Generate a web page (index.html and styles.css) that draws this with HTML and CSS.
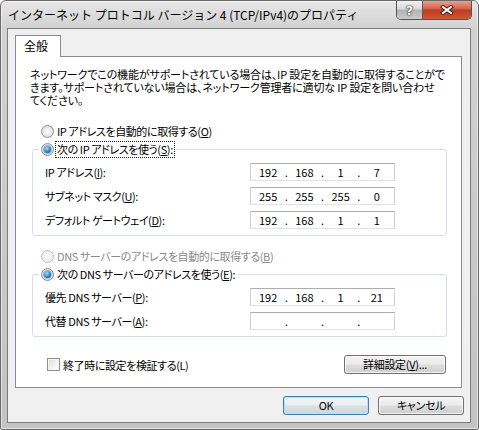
FILE: index.html
```html
<!DOCTYPE html>
<html lang="ja">
<head>
<meta charset="utf-8">
<title>インターネット プロトコル バージョン 4 (TCP/IPv4)のプロパティ</title>
<link rel="stylesheet" href="styles.css">
</head>
<body>
<div class="window">
  <div class="titlebar">
    <div class="title">インターネット プロトコル バージョン 4 (TCP/IPv4)のプロパティ</div>
    <div class="caption-buttons">
      <div class="cap help">?</div>
      <div class="cap close">
        <svg width="14" height="10" viewBox="0 0 14 10"><path d="M3 2 L11 8 M11 2 L3 8" stroke="#3b1a14" stroke-width="4" stroke-linecap="square" fill="none"/><path d="M3 2 L11 8 M11 2 L3 8" stroke="#fff" stroke-width="2" stroke-linecap="square" fill="none"/></svg>
      </div>
    </div>
  </div>
  <div class="client">
    <div class="tabs"><div class="tab">全般</div></div>
    <div class="panel">
      <p class="desc">ネットワークでこの機能がサポートされている場合は、IP 設定を自動的に取得することがで<br>きます。サポートされていない場合は、ネットワーク管理者に適切な IP 設定を問い合わせ<br>てください。</p>

      <div class="radio-row"><span class="radio"></span><span class="rlabel">IP アドレスを自動的に取得する(<u>O</u>)</span></div>
      <fieldset class="group">
        <legend><span class="radio on"><span class="dot"></span></span><span class="rlabel focus">次の IP アドレスを使う(<u>S</u>):</span></legend>
        <div class="row"><span class="flabel">IP アドレス(<u>I</u>):</span><div class="ip"><span class="seg">192</span><span class="sep">.</span><span class="seg">168</span><span class="sep">.</span><span class="seg">1</span><span class="sep">.</span><span class="seg">7</span></div></div>
        <div class="row"><span class="flabel">サブネット マスク(<u>U</u>):</span><div class="ip"><span class="seg">255</span><span class="sep">.</span><span class="seg">255</span><span class="sep">.</span><span class="seg">255</span><span class="sep">.</span><span class="seg">0</span></div></div>
        <div class="row"><span class="flabel">デフォルト ゲートウェイ(<u>D</u>):</span><div class="ip"><span class="seg">192</span><span class="sep">.</span><span class="seg">168</span><span class="sep">.</span><span class="seg">1</span><span class="sep">.</span><span class="seg">1</span></div></div>
      </fieldset>

      <div class="radio-row second"><span class="radio disabled"></span><span class="rlabel muted">DNS サーバーのアドレスを自動的に取得する(<u>B</u>)</span></div>
      <fieldset class="group">
        <legend><span class="radio on"><span class="dot"></span></span><span class="rlabel">次の DNS サーバーのアドレスを使う(<u>E</u>):</span></legend>
        <div class="row"><span class="flabel">優先 DNS サーバー(<u>P</u>):</span><div class="ip"><span class="seg">192</span><span class="sep">.</span><span class="seg">168</span><span class="sep">.</span><span class="seg">1</span><span class="sep">.</span><span class="seg">21</span></div></div>
        <div class="row"><span class="flabel">代替 DNS サーバー(<u>A</u>):</span><div class="ip"><span class="seg"></span><span class="sep">.</span><span class="seg"></span><span class="sep">.</span><span class="seg"></span><span class="sep">.</span><span class="seg"></span></div></div>
      </fieldset>

      <div class="options-row">
        <div class="check"><span class="box"></span><span>終了時に設定を検証する(L)</span></div>
        <button class="btn adv">詳細設定(<u>V</u>)...</button>
      </div>
    </div>
    <div class="footer">
      <button class="btn default">OK</button>
      <button class="btn">キャンセル</button>
    </div>
  </div>
</div>
</body>
</html>
```
FILE: styles.css
```css
* { box-sizing: border-box; }
html, body { margin: 0; padding: 0; }
body {
  width: 479px;
  height: 430px;
  overflow: hidden;
  background: #fff;
  font-family: "Noto Sans CJK JP", "Noto Sans", sans-serif;
  font-size: 12px;
  color: #000;
}
u { text-decoration: underline; text-underline-offset: 1px; }

.window {
  width: 479px;
  height: 430px;
  border: 1px solid #6a6a6a;
  border-radius: 6px 6px 2px 2px;
  background: linear-gradient(to bottom, #e6e6e6 0, #d2d2d2 27px, #c8c8c8 60%, #c3c3c3 100%);
  box-shadow: inset 0 0 0 1px rgba(255,255,255,0.55);
  display: flex;
  flex-direction: column;
}

.titlebar {
  height: 27px;
  flex: 0 0 27px;
  display: flex;
  align-items: flex-start;
  padding-left: 7px;
}
.title {
  flex: 1;
  margin-top: 6px;
  line-height: 16px;
  font-size: 12px;
  white-space: nowrap;
  color: #000;
}
.caption-buttons {
  display: flex;
  width: 76px;
  height: 19px;
  margin-right: 6px;
  border: 1px solid #555;
  border-top: none;
  border-radius: 0 0 5px 5px;
  overflow: hidden;
}
.cap {
  display: flex;
  align-items: center;
  justify-content: center;
}
.help {
  flex: 0 0 26px;
  border-right: 1px solid #5a5a5a;
  background: linear-gradient(to bottom, #f2f2f2 0, #d9d9d9 45%, #b2b2b2 50%, #c9c9c9 100%);
  color: #fff;
  font-family: "DejaVu Sans", sans-serif;
  font-weight: bold;
  font-size: 13px;
  line-height: 17px;
  text-shadow: 0 0 1px #333, 0 0 1px #333, 0 0 2px #444;
}
.close {
  flex: 1;
  background: linear-gradient(to bottom, #e9a08d 0, #d36a52 40%, #c13a1e 52%, #d0573a 100%);
}

.client {
  flex: 1;
  margin: 0 7px 6px 6px;
  border: 1px solid #7c7c7c;
  background: #f0f0f0;
  padding: 6px 6px 0 7px;
  display: flex;
  flex-direction: column;
}

.tabs {
  display: flex;
  height: 21px;
  flex: 0 0 21px;
}
.tab {
  position: relative;
  z-index: 1;
  width: 46px;
  height: 22px;
  border: 1px solid #898c95;
  border-bottom: none;
  background: #fff;
  padding-left: 8px;
  line-height: 20px;
}

.panel {
  height: 332px;
  flex: 0 0 332px;
  margin-right: 2px;
  background: #fff;
  border: 1px solid #898c95;
  padding: 0 14px;
  display: flex;
  flex-direction: column;
  font-size: 11px;
  letter-spacing: -0.4px;
  font-feature-settings: "palt";
}
.desc {
  margin: 11px 0 0 0;
  line-height: 13px;
  letter-spacing: -0.15px;
  white-space: nowrap;
}

.radio-row {
  display: flex;
  align-items: center;
  height: 18px;
  margin: 15px 0 0 11px;
}
.radio-row.second { margin-top: 11px; }

.radio {
  flex: 0 0 13px;
  width: 13px;
  height: 13px;
  border-radius: 50%;
  border: 1px solid #8e8f8f;
  background: radial-gradient(circle at 50% 50%, #ffffff 0, #eeeeee 40%, #d4d4d4 90%);
  display: flex;
  align-items: center;
  justify-content: center;
  margin-right: 2px;
}
.radio.disabled {
  border-color: #c2c2c2;
  background: radial-gradient(circle at 50% 50%, #fbfbfb 0, #f0f0f0 60%, #e4e4e4 100%);
}
.dot {
  width: 7px;
  height: 7px;
  border-radius: 50%;
  background: radial-gradient(circle at 40% 35%, #a8e2fb 0, #3b9ee0 40%, #0c5a9c 80%, #0a4a82 100%);
  box-shadow: 0 0 0 1px rgba(40, 90, 140, 0.35);
}
.rlabel {
  padding: 0 1px;
  line-height: 15px;
  white-space: nowrap;
}
.rlabel.focus { outline: 1px dotted #222; outline-offset: 0; }
.muted { color: #8a8a8a; }

.group {
  margin: 0 0 0 2px;
  padding: 5px 51px 6px 12px;
  border: 1px solid #d5dfe5;
  border-radius: 3px;
  min-width: 0;
}
.group legend {
  display: flex;
  align-items: center;
  height: 18px;
  padding: 0 2px;
  margin-left: -6px;
}

.row {
  display: flex;
  align-items: center;
  height: 18px;
}
.row + .row { margin-top: 6px; }
.flabel {
  flex: 1;
  white-space: nowrap;
}
.ip {
  width: 145px;
  height: 18px;
  border: 1px solid;
  border-color: #abadb3 #cfd3d9 #dfe3e8 #cfd3d9;
  background: #fff;
  display: flex;
  align-items: center;
  padding: 0 2px;
  letter-spacing: 0;
  font-feature-settings: normal;
}
.seg {
  flex: 1;
  text-align: center;
  line-height: 16px;
}
.sep {
  flex: 0 0 6px;
  text-align: center;
  line-height: 16px;
}

.options-row {
  display: flex;
  align-items: center;
  justify-content: space-between;
  height: 19px;
  margin-top: 18px;
}
.check {
  display: flex;
  align-items: center;
  margin-left: 17px;
  gap: 3px;
}
.box {
  width: 13px;
  height: 13px;
  border: 1px solid #8e8f8f;
  background: linear-gradient(135deg, #dcdcdc 0, #f0f0f0 50%, #ffffff 100%);
  box-shadow: inset 0 0 0 1px #f6f6f6;
}

.btn {
  height: 19px;
  border: 1px solid #707070;
  border-radius: 3px;
  background: linear-gradient(to bottom, #f4f4f4 0, #ebebeb 48%, #dddddd 52%, #cfcfcf 100%);
  box-shadow: inset 0 0 0 1px rgba(255,255,255,0.75);
  font-family: "Noto Sans CJK JP", "Noto Sans", sans-serif;
  font-size: 11px;
  letter-spacing: -0.3px;
  line-height: 15px;
  color: #000;
  padding: 0;
  font-feature-settings: "palt";
}
.adv {
  width: 102px;
  margin-right: 1px;
}
.footer {
  display: flex;
  justify-content: flex-end;
  gap: 9px;
  margin-top: 8px;
}
.footer .btn { width: 86px; }
.btn.default {
  border-color: #3c7fb1;
  box-shadow: inset 0 0 0 1px #b6e3f8;
  background: linear-gradient(to bottom, #f2f6f8 0, #e8eef1 48%, #d8e1e6 52%, #cbd6dc 100%);
}
```
